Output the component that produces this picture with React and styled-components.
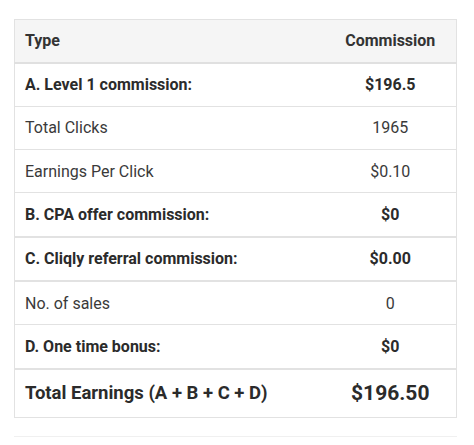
import React from "react";
import styled, { createGlobalStyle } from "styled-components";

const Global = createGlobalStyle`
  html, body { margin: 0; padding: 0; background: #fff; }
  body { font-family: Roboto, "Noto Sans", Arial, sans-serif; color: #333; }
`;

const Page = styled.div`
  padding: 19px 17px 0 14px;
`;

const Table = styled.table`
  width: 443px;
  border-collapse: collapse;
  border: 1px solid #e2e2e2;
  table-layout: fixed;
`;

const HeadRow = styled.tr`
  background: #f5f5f5;
  border-bottom: 2px solid #e0e0e0;
`;

const Row = styled.tr`
  border-bottom: ${(p) => (p.$thick ? "2px" : "1px")} solid #e2e2e2;
`;

const Th = styled.th`
  box-sizing: border-box;
  height: 43px;
  padding: 0 10px;
  font-size: 16px;
  font-weight: 700;
  color: #333;
  text-align: ${(p) => (p.$center ? "center" : "left")};
  width: ${(p) => p.$w || "auto"};
`;

const Td = styled.td`
  height: ${(p) => (p.$total ? "47.5px" : "42.3px")};
  padding: 0 10px;
  font-size: ${(p) => (p.$total ? (p.$center ? "21px" : "18.5px") : "16px")};
  font-weight: ${(p) => (p.$bold ? 700 : 400)};
  color: ${(p) => (p.$bold ? "#2b2b2b" : "#3a3a3a")};
  text-align: ${(p) => (p.$center ? "center" : "left")};
`;

const Divider = styled.div`
  width: 443px;
  height: 1px;
  background: #f0f0f0;
  margin-top: 18px;
`;

const rows = [
  { label: "A. Level 1 commission:", value: "$196.5", bold: true },
  { label: "Total Clicks", value: "1965" },
  { label: "Earnings Per Click", value: "$0.10" },
  { label: "B. CPA offer commission:", value: "$0", bold: true, thick: true },
  { label: "C. Cliqly referral commission:", value: "$0.00", bold: true, thick: true },
  { label: "No. of sales", value: "0" },
  { label: "D. One time bonus:", value: "$0", bold: true, thick: true },
];

export default function App() {
  return (
    <>
      <Global />
      <Page>
        <Table>
          <thead>
            <HeadRow>
              <Th>Type</Th>
              <Th $center $w="132px">Commission</Th>
            </HeadRow>
          </thead>
          <tbody>
            {rows.map((r) => (
              <Row key={r.label} $thick={r.thick}>
                <Td $bold={r.bold}>{r.label}</Td>
                <Td $bold={r.bold} $center>{r.value}</Td>
              </Row>
            ))}
            <Row>
              <Td $bold $total>Total Earnings (A + B + C + D)</Td>
              <Td $bold $total $center>$196.50</Td>
            </Row>
          </tbody>
        </Table>
        <Divider />
      </Page>
    </>
  );
}
